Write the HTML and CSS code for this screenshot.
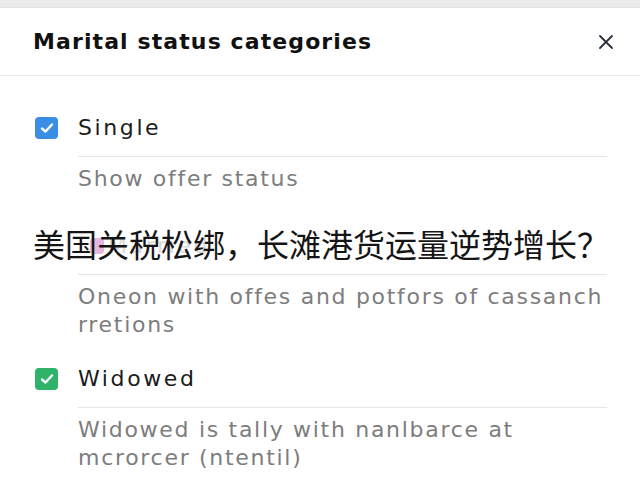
FILE: index.html
```html
<!DOCTYPE html>
<html lang="en">
<head>
<meta charset="utf-8">
<link rel="stylesheet" href="styles.css">
</head>
<body>
<div class="topbar"></div>
<div class="panel">
  <div class="header">
    <h1 class="title">Marital status categories</h1>
    <button class="close" aria-label="Close">
      <svg width="16" height="16" viewBox="0 0 16 16"><path d="M2 2 L14 14 M14 2 L2 14" stroke="#2a2e3b" stroke-width="1.8" stroke-linecap="round" fill="none"/></svg>
    </button>
  </div>
  <div class="list">
    <div class="item">
      <span class="check check-blue">
        <svg width="14" height="12" viewBox="0 0 14 12"><path d="M2 6.5 L5.5 9.5 L12 2.5" stroke="#fff" stroke-width="2.4" stroke-linecap="round" stroke-linejoin="round" fill="none"/></svg>
      </span>
      <span class="label">Single</span>
      <div class="rule"></div>
      <p class="desc">Show offer status</p>
    </div>
    <div class="item item-hidden">
      <span class="check check-none"></span>
      <span class="label label-ghost"><span class="ghost-dot"></span>Married</span>
      <div class="rule"></div>
      <p class="desc">Oneon with offes and potfors of cassanch rretions</p>
    </div>
    <div class="item">
      <span class="check check-green">
        <svg width="14" height="12" viewBox="0 0 14 12"><path d="M2 6.5 L5.5 9.5 L12 2.5" stroke="#fff" stroke-width="2.4" stroke-linecap="round" stroke-linejoin="round" fill="none"/></svg>
      </span>
      <span class="label">Widowed</span>
      <div class="rule"></div>
      <p class="desc">Widowed is tally with nanlbarce at mcrorcer (ntentil)</p>
    </div>
  </div>
  <div class="overlay">美国关税松绑，长滩港货运量逆势增长？</div>
</div>
</body>
</html>
```

FILE: styles.css
```css
* { box-sizing: border-box; }
html, body {
  margin: 0;
  padding: 0;
  background: #ffffff;
  width: 640px;
  height: 480px;
  overflow: hidden;
  font-family: "DejaVu Sans", "Noto Sans CJK SC", sans-serif;
}
.topbar {
  height: 8px;
  background: #ebebeb;
  border-bottom: 1px solid #e2e2e2;
}
.panel {
  position: relative;
}
.header {
  height: 68px;
  display: flex;
  align-items: center;
  justify-content: space-between;
  padding: 0 26px 0 33px;
  border-bottom: 1px solid #ececec;
}
.title {
  margin: 0;
  font-size: 22px;
  font-weight: 700;
  color: #111111;
  letter-spacing: 1.1px;
}
.close {
  background: none;
  border: none;
  padding: 0;
  width: 16px;
  height: 16px;
  display: flex;
}
.list {
  padding: 39px 33px 0 35px;
}
.item {
  display: grid;
  grid-template-columns: 23px 1fr;
  column-gap: 20px;
  align-items: center;
}
.item + .item { margin-top: 27px; }
.item.item-hidden { margin-top: 40px; }
.check {
  width: 23px;
  height: 22px;
  border-radius: 4px;
  display: flex;
  align-items: center;
  justify-content: center;
}
.check-blue { background: #3a8ee6; }
.check-green { background: #2fb36b; }
.check-none { background: transparent; }
.label {
  font-size: 22px;
  line-height: 26px;
  color: #1b1b1b;
  letter-spacing: 2.6px;
}
.label-ghost {
  color: #dadada;
  display: flex;
  align-items: center;
  gap: 4px;
  padding-left: 12px;
}
.ghost-dot {
  width: 14px;
  height: 16px;
  border-radius: 4px;
  background: #e7b6d9;
}
.rule {
  grid-column: 2;
  height: 1px;
  background: #e6e6e6;
  margin-top: 15px;
}
.desc {
  grid-column: 2;
  margin: 8px 0 0;
  font-size: 22px;
  line-height: 28px;
  color: #7d7d7d;
  letter-spacing: 1.7px;
}
.overlay {
  position: absolute;
  left: 33px;
  top: 217px;
  font-family: "Noto Sans CJK SC", sans-serif;
  font-size: 32px;
  line-height: 36px;
  color: #151515;
  white-space: nowrap;
}
```
